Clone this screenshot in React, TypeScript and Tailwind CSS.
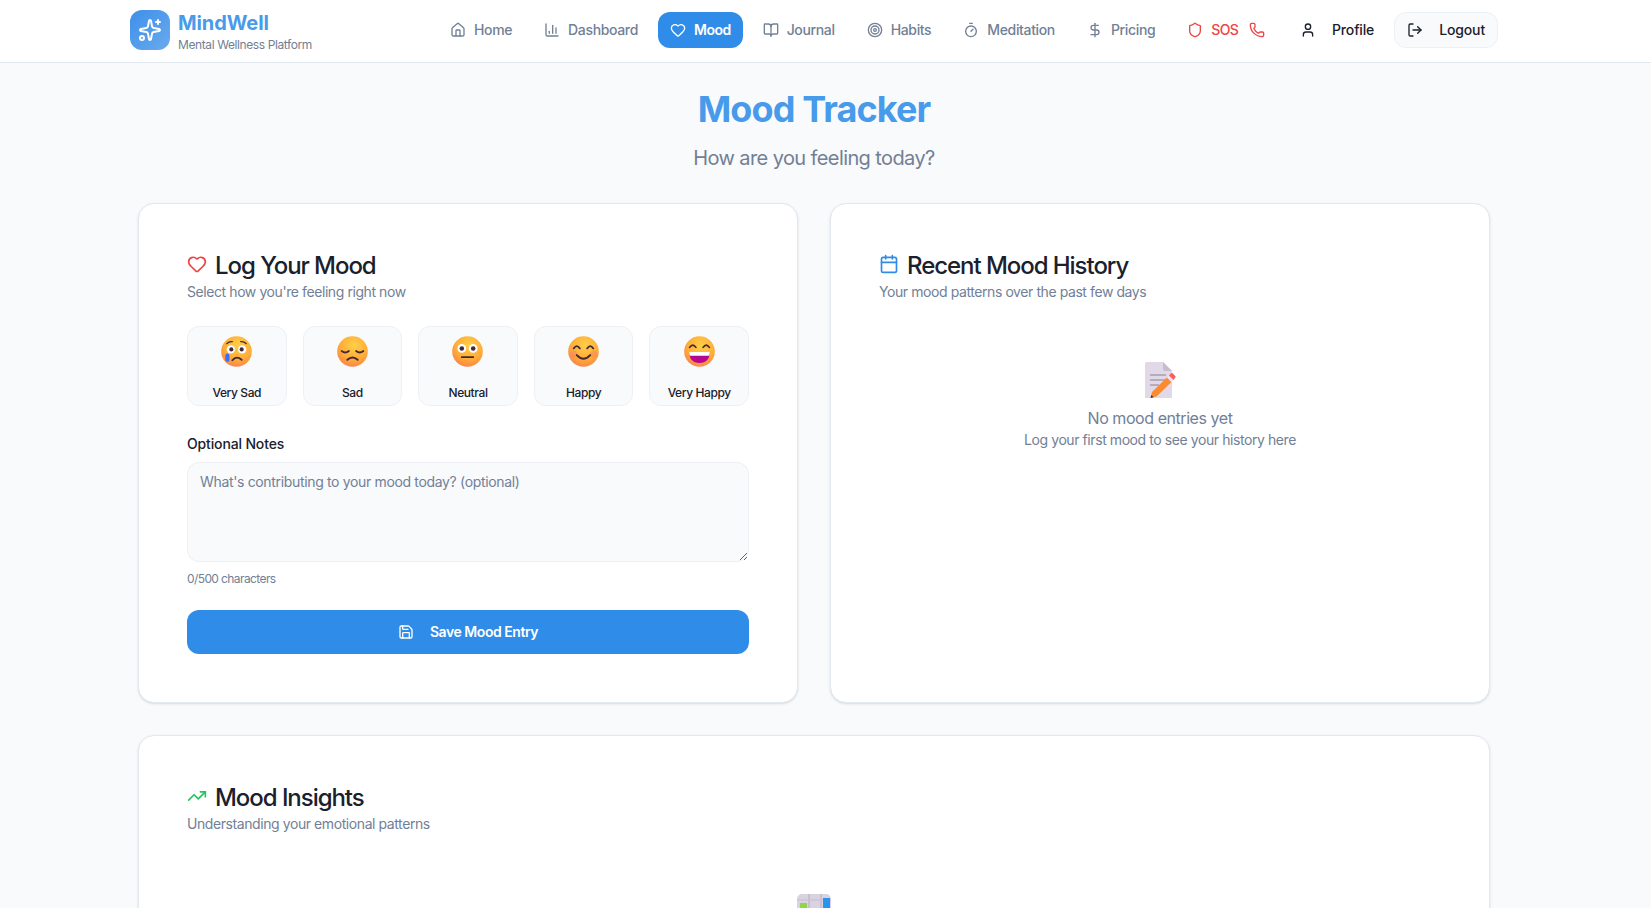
import type { ReactNode } from 'react';
import {
  BookOpen,
  Calendar,
  ChartColumn,
  DollarSign,
  Heart,
  House,
  LogOut,
  Phone,
  Save,
  Shield,
  Sparkles,
  Target,
  Timer,
  TrendingUp,
  User,
} from 'lucide-react';

const navItems = [
  { label: 'Home', icon: House },
  { label: 'Dashboard', icon: ChartColumn },
  { label: 'Mood', icon: Heart, active: true },
  { label: 'Journal', icon: BookOpen },
  { label: 'Habits', icon: Target },
  { label: 'Meditation', icon: Timer },
  { label: 'Pricing', icon: DollarSign },
];

function Face({ children }: { children: ReactNode }) {
  return (
    <svg width="31" height="31" viewBox="0 0 30 30">
      <defs>
        <radialGradient id="face" cx="0.56" cy="0.3" r="0.8">
          <stop offset="0" stopColor="#ffcf48" />
          <stop offset="0.58" stopColor="#ffab38" />
          <stop offset="0.84" stopColor="#fb8b45" />
          <stop offset="1" stopColor="#ee6c9e" />
        </radialGradient>
      </defs>
      <circle cx="15" cy="15" r="14.8" fill="url(#face)" />
      {children}
    </svg>
  );
}

const dark = '#432a3a';

const moods: { label: string; face: ReactNode }[] = [
  {
    label: 'Very Sad',
    face: (
      <>
        <circle cx="9.5" cy="13" r="4" fill="#fff" />
        <circle cx="20.5" cy="13" r="4" fill="#fff" />
        <circle cx="10" cy="13" r="2" fill={dark} />
        <circle cx="20" cy="13" r="2" fill={dark} />
        <path d="M5.5 7.5 Q8 5 11 5.5 M19 5.5 Q22 5 24.5 7.5" fill="none" stroke={dark} strokeWidth="1.1" strokeLinecap="round" />
        <path d="M11 23.5 Q15 18.5 20 23" fill="none" stroke={dark} strokeWidth="1.8" strokeLinecap="round" />
        <rect x="4.2" y="17" width="4" height="8" rx="2" fill="#3f6ef0" />
      </>
    ),
  },
  {
    label: 'Sad',
    face: (
      <>
        <path d="M4.5 14.5 Q8 17.5 11.5 14.5 M18.5 14.5 Q22 17.5 25.5 14.5" fill="none" stroke={dark} strokeWidth="1.8" strokeLinecap="round" />
        <path d="M10 23 Q15 18.5 20 23" fill="none" stroke={dark} strokeWidth="1.9" strokeLinecap="round" />
      </>
    ),
  },
  {
    label: 'Neutral',
    face: (
      <>
        <circle cx="9.5" cy="12" r="4.2" fill="#fff" />
        <circle cx="20.5" cy="12" r="4.2" fill="#fff" />
        <circle cx="9.5" cy="12" r="2.2" fill={dark} />
        <circle cx="20.5" cy="12" r="2.2" fill={dark} />
        <path d="M9.5 20.5 H20.5" fill="none" stroke={dark} strokeWidth="1.8" strokeLinecap="round" />
      </>
    ),
  },
  {
    label: 'Happy',
    face: (
      <>
        <circle cx="5.5" cy="17.5" r="3.5" fill="#f97a70" opacity="0.45" />
        <circle cx="25" cy="17.5" r="3.5" fill="#f97a70" opacity="0.45" />
        <path d="M5.5 12 Q8.5 7.5 11.5 12 M18.5 12 Q21.5 7.5 24.5 12" fill="none" stroke={dark} strokeWidth="1.7" strokeLinecap="round" />
        <path d="M8.5 18.5 Q15 25.5 21.5 18.5" fill="none" stroke={dark} strokeWidth="1.9" strokeLinecap="round" />
      </>
    ),
  },
  {
    label: 'Very Happy',
    face: (
      <>
        <path d="M5.5 11 Q8.5 6.5 11.5 11 M18.5 11 Q21.5 6.5 24.5 11" fill="none" stroke={dark} strokeWidth="1.7" strokeLinecap="round" />
        <path d="M5 15 H25 Q25 26 15 26.2 Q5 26 5 15 Z" fill="#b8058f" />
        <path d="M5 15 H25 Q25 17.5 24.4 19 H5.6 Q5 17.5 5 15 Z" fill="#fff" />
      </>
    ),
  },
];

function NoteEmoji() {
  return (
    <svg width="32" height="36" viewBox="0 0 32 36">
      <path d="M1 1.5 A1.5 1.5 0 0 1 2.5 0 H19 L28 9 V36 H1 Z" fill="#e2d9e8" />
      <path d="M19 0 L28 9 H21 A2 2 0 0 1 19 7 Z" fill="#c5bccc" />
      <path d="M6 13 H22 M6 18 H22 M6 23 H15" stroke="#a79eae" strokeWidth="1.3" />
      <path d="M8 30 L23 15.5 L27.5 20 L12.5 34.5 L6.5 36 Z" fill="#fb8a30" />
      <path d="M23 15.5 L25 13.5 L29.5 18 L27.5 20 Z" fill="#ece4f2" />
      <path d="M25 13.5 L26.8 11.6 A1.5 1.5 0 0 1 29 11.6 L31 13.7 A1.5 1.5 0 0 1 31 16 L29.5 18 Z" fill="#f8605a" />
      <path d="M7.5 33 L6.5 36 L9.5 35.2 Z" fill="#3d2a3a" />
    </svg>
  );
}

function ChartEmoji() {
  return (
    <svg width="34" height="36" viewBox="0 0 34 36">
      <rect x="0" y="0" width="34" height="36" rx="5" fill="#d9d2e0" />
      <path d="M12 0 V36 M24 0 V36" stroke="#bdb5c6" strokeWidth="1.2" />
      <path d="M0 6 H34" stroke="#c6bfcf" strokeWidth="1" />
      <rect x="3" y="9" width="7" height="27" fill="#8fd64a" />
      <rect x="26" y="4" width="7" height="32" fill="#2a94ec" />
    </svg>
  );
}

function CardTitle({ icon, title, subtitle }: { icon: ReactNode; title: string; subtitle: string }) {
  return (
    <div className="-mt-[2px]">
      <div className="flex items-center gap-2">
        <span className="-mt-1 flex">{icon}</span>
        <h2 className="text-2xl font-medium leading-8 tracking-[-1.05px] text-[#1a202c]">{title}</h2>
      </div>
      <p className="text-sm leading-5 tracking-[-0.42px] text-[#718096]">{subtitle}</p>
    </div>
  );
}

export default function App() {
  return (
    <div className="h-screen overflow-hidden bg-[#f9fafc] font-['Inter',sans-serif] text-[#1a202c]">
      <header className="h-[63px] border-b border-[#e2e8f0] bg-white">
        <div className="w-[1628px]">
          <div className="mx-auto flex h-[60px] max-w-[1400px] items-center px-4">
            <div className="flex items-center gap-2">
              <div className="flex h-10 w-10 items-center justify-center rounded-xl bg-gradient-to-br from-[#3d8fea] to-[#69aaee]">
                <Sparkles size={24} strokeWidth={2} className="text-white" />
              </div>
              <div className="pt-[2px]">
                <div className="text-xl font-bold leading-7 tracking-[-0.1px] text-[#489bea]">MindWell</div>
                <div className="text-xs leading-4 tracking-[-0.4px] text-[#718096]">Mental Wellness Platform</div>
              </div>
            </div>
            <nav className="ml-auto flex items-center gap-2 text-sm font-medium tracking-[-0.35px]">
              {navItems.map(({ label, icon: Icon, active }) => (
                <a
                  key={label}
                  className={
                    active
                      ? 'flex h-9 items-center gap-2 rounded-xl bg-[#308ce9] px-3 font-semibold tracking-[-0.5px] text-white'
                      : 'flex h-9 items-center gap-2 rounded-xl px-3 text-[#718096]'
                  }
                >
                  <Icon size={16} />
                  {label}
                </a>
              ))}
              <a className="flex h-9 items-center gap-2 rounded-xl pl-3 pr-[15px] tracking-[-0.7px] text-[#ef4444]">
                <Shield size={16} />
                SOS
                <Phone size={16} className="ml-[3px]" />
              </a>
              <a className="flex h-9 items-center gap-4 rounded-xl px-3 tracking-[-0.15px] text-[#1a202c]">
                <User size={16} />
                Profile
              </a>
              <button className="flex h-9 items-center gap-4 rounded-xl border border-[#edf0f5] bg-[#f9fafc] px-3 tracking-[-0.15px] text-[#1a202c]">
                <LogOut size={16} />
                Logout
              </button>
            </nav>
          </div>
        </div>
      </header>

      <div className="w-[1628px]">
        <main className="mx-auto max-w-[1400px] px-6 pt-[26px]">
          <div className="text-center">
            <h1 className="text-4xl font-bold leading-10 tracking-[-0.9px] text-[#489bea]">Mood Tracker</h1>
            <p className="mt-[15px] text-xl leading-7 tracking-[-0.6px] text-[#718096]">How are you feeling today?</p>
          </div>

          <div className="mt-[31px] grid grid-cols-2 gap-8">
            <section className="rounded-2xl border border-[#e2e8f0] bg-white p-12 shadow-sm">
              <CardTitle
                icon={<Heart size={20} className="text-[#ef4444]" />}
                title="Log Your Mood"
                subtitle="Select how you're feeling right now"
              />
              <div className="mt-6 grid grid-cols-5 gap-4">
                {moods.map((m) => (
                  <button
                    key={m.label}
                    className="flex h-[80px] flex-col items-center rounded-xl border border-[#edf0f5] bg-[#f9fafc] pt-[9px] text-xs font-medium tracking-[-0.4px]"
                  >
                    <Face>{m.face}</Face>
                    <span className="mt-[18px] leading-4">{m.label}</span>
                  </button>
                ))}
              </div>
              <label className="mt-7 block text-sm font-medium leading-5 tracking-[-0.15px]">Optional Notes</label>
              <textarea
                readOnly
                placeholder="What's contributing to your mood today? (optional)"
                className="mt-2 block h-[100px] w-full rounded-xl border border-[#edf0f5] bg-[#f9fafc] px-3 pb-2 pt-[9px] text-sm leading-5 tracking-[-0.34px] outline-none placeholder:text-[#718096]"
              />
              <p className="mt-[9px] text-xs leading-4 tracking-[-0.6px] text-[#718096]">0/500 characters</p>
              <button className="mt-[23px] flex h-11 w-full items-center justify-center gap-4 rounded-xl bg-[#308ce9] text-sm font-semibold tracking-[-0.45px] text-white">
                <Save size={16} />
                Save Mood Entry
              </button>
            </section>

            <section className="rounded-2xl border border-[#e2e8f0] bg-white p-12 shadow-sm">
              <CardTitle
                icon={<Calendar size={20} className="text-[#308ce9]" />}
                title="Recent Mood History"
                subtitle="Your mood patterns over the past few days"
              />
              <div className="mt-[60px] flex flex-col items-center text-center text-[#718096]">
                <NoteEmoji />
                <p className="mt-[8px] text-base leading-6 tracking-[-0.44px]">No mood entries yet</p>
                <p className="text-sm leading-5 tracking-[-0.42px]">Log your first mood to see your history here</p>
              </div>
            </section>
          </div>

          <section className="mt-8 rounded-2xl border border-[#e2e8f0] bg-white p-12 shadow-sm">
            <CardTitle
              icon={<TrendingUp size={20} className="text-[#22c55e]" />}
              title="Mood Insights"
              subtitle="Understanding your emotional patterns"
            />
            <div className="mt-[60px] flex flex-col items-center">
              <ChartEmoji />
            </div>
          </section>
        </main>
      </div>
    </div>
  );
}
